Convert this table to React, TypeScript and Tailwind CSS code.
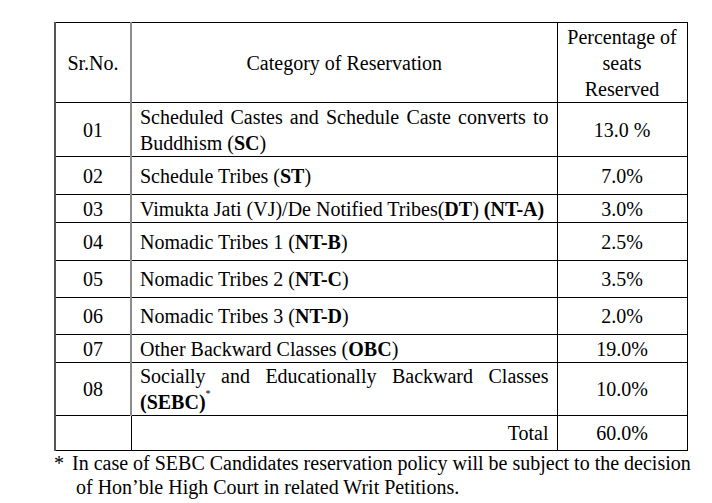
export default function App() {
  const rows = [
    { no: "01", h: "h-[54px]", pct: "13.0 %", cat: <>Scheduled Castes and Schedule Caste converts to Buddhism (<b>SC</b>)</> },
    { no: "02", h: "h-[38px]", pct: "7.0%", cat: <>Schedule Tribes (<b>ST</b>)</> },
    { no: "03", h: "h-[28px]", pct: "3.0%", cat: <span className="whitespace-nowrap">Vimukta Jati (VJ)/De Notified Tribes(<b>DT</b>) <b>(NT-A)</b></span> },
    { no: "04", h: "h-[38px]", pct: "2.5%", cat: <>Nomadic Tribes 1 (<b>NT-B</b>)</> },
    { no: "05", h: "h-[37px]", pct: "3.5%", cat: <>Nomadic Tribes 2 (<b>NT-C</b>)</> },
    { no: "06", h: "h-[37px]", pct: "2.0%", cat: <>Nomadic Tribes 3 (<b>NT-D</b>)</> },
    { no: "07", h: "h-[28px]", pct: "19.0%", cat: <>Other Backward Classes (<b>OBC</b>)</> },
    { no: "08", h: "h-[53px]", pct: "10.0%", cat: <>Socially and Educationally Backward Classes <b>(SEBC)</b><sup className="text-[10px] align-[7px]">*</sup></> },
  ];

  return (
    <div className="min-h-screen bg-white pt-[22px] pl-[54px] text-black [font-family:'Liberation_Serif','Times_New_Roman',serif] text-[20px]">
      {/* reservation table */}
      <table className="border-collapse w-[632px] table-fixed">
        <colgroup>
          <col className="w-[76px]" />
          <col className="w-[426px]" />
          <col className="w-[130px]" />
        </colgroup>
        <thead>
          <tr className="h-[80px]">
            <th className="font-normal border border-black border-l-2 border-l-[#555] text-center">Sr.No.</th>
            <th className="font-normal border border-black border-l-2 border-l-[#8c8c8c] text-center">Category of Reservation</th>
            <th className="font-normal border border-black text-center leading-[26px]">
              Percentage of<br />seats<br />Reserved
            </th>
          </tr>
        </thead>
        <tbody>
          {rows.map((r) => (
            <tr key={r.no} className={r.h}>
              <td className="border border-black border-l-2 border-l-[#555] text-center leading-[26px]">{r.no}</td>
              <td className="border border-black border-l-2 border-l-[#8c8c8c] px-[8px] leading-[26px] text-justify">{r.cat}</td>
              <td className="border border-black text-center leading-[26px]">{r.pct}</td>
            </tr>
          ))}
          <tr className="h-[35px]">
            <td className="border border-black border-l-2 border-l-[#555]"></td>
            <td className="border border-black px-[8px] text-right leading-[26px]">Total</td>
            <td className="border border-black text-center leading-[26px]">60.0%</td>
          </tr>
        </tbody>
      </table>

      {/* footnote */}
      <div className="flex w-[645px] leading-[24px]">
        <span className="w-[18px] shrink-0">*</span>
        <p className="pl-[4px] -indent-[4px]">
          In case of SEBC Candidates reservation policy will be subject to the decision of Hon’ble High Court in related Writ Petitions.
        </p>
      </div>
    </div>
  );
}
